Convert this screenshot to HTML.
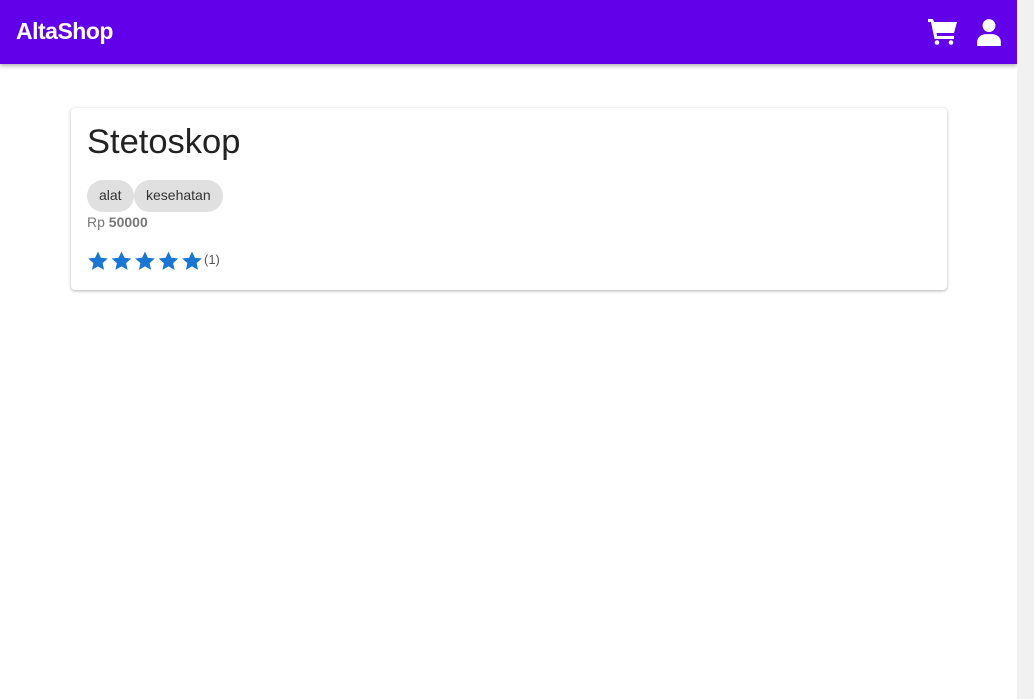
<!DOCTYPE html>
<html><head><style>
body{margin:0;width:1034px;height:699px;overflow:hidden;background:#fff;font-family:"Liberation Sans",sans-serif;position:relative}
.bar{position:absolute;left:0;top:0;width:1017px;height:64px;background:#6200ea;box-shadow:0 2px 4px rgba(0,0,0,.3)}
.logo{position:absolute;left:16px;top:18px;color:#fff;font-weight:bold;font-size:23px;letter-spacing:-0.5px}
.sb{position:absolute;right:0;top:0;width:17px;height:699px;background:#f1f1f1}
.card{position:absolute;left:71px;top:108px;width:876px;height:182px;background:#fff;border-radius:4px;box-shadow:0 1px 3px rgba(0,0,0,.3)}
h1{position:absolute;left:16px;top:15px;margin:0;font-weight:normal;font-size:34.5px;color:#222}
.chip{position:absolute;top:72px;height:32px;line-height:31px;background:#e0e0e0;border-radius:16px;font-size:14px;color:#333;padding:0 12px}
.price{position:absolute;left:16px;top:106px;font-size:14px;color:#777}
.stars{position:absolute;left:16px;top:142px;display:flex;align-items:flex-start}
.cnt{font-size:13px;color:#555;margin-top:2px}
</style></head><body>
<div class="bar"><div class="logo">AltaShop</div>
<svg style="position:absolute;left:928px;top:19px" width="29" height="26" viewBox="0 0 29 26" fill="#fff"><path d="M0 0h5l1 3h23l-3 11H8.5l.6 3H26v3H6.5L3 3H0z"/><circle cx="9" cy="23.5" r="2.3"/><circle cx="23" cy="23.5" r="2.3"/></svg>
<svg style="position:absolute;left:976px;top:18px" width="26" height="28" viewBox="0 0 24 26" fill="#fff"><circle cx="12" cy="7" r="6"/><path d="M1 26v-4c0-4 4-7 8-7h6c4 0 8 3 8 7v4z"/></svg>
</div>
<div class="sb"></div>
<div class="card">
<h1>Stetoskop</h1>
<div class="chip" style="left:16px">alat</div>
<div class="chip" style="left:63px">kesehatan</div>
<div class="price">Rp <b>50000</b></div>
<div class="stars">
<svg width="117" height="22" viewBox="0 0 117 22" fill="#1976d2">
<g id="s"><path d="M11 1.5l2.9 6.3 6.9.7-5.2 4.6 1.5 6.8L11 16.4l-6.1 3.5 1.5-6.8L1.2 8.5l6.9-.7z"/></g>
<use href="#s" x="23.5"/><use href="#s" x="47"/><use href="#s" x="70.5"/><use href="#s" x="94"/>
</svg><span class="cnt">(1)</span></div>
</div>
</body></html>
